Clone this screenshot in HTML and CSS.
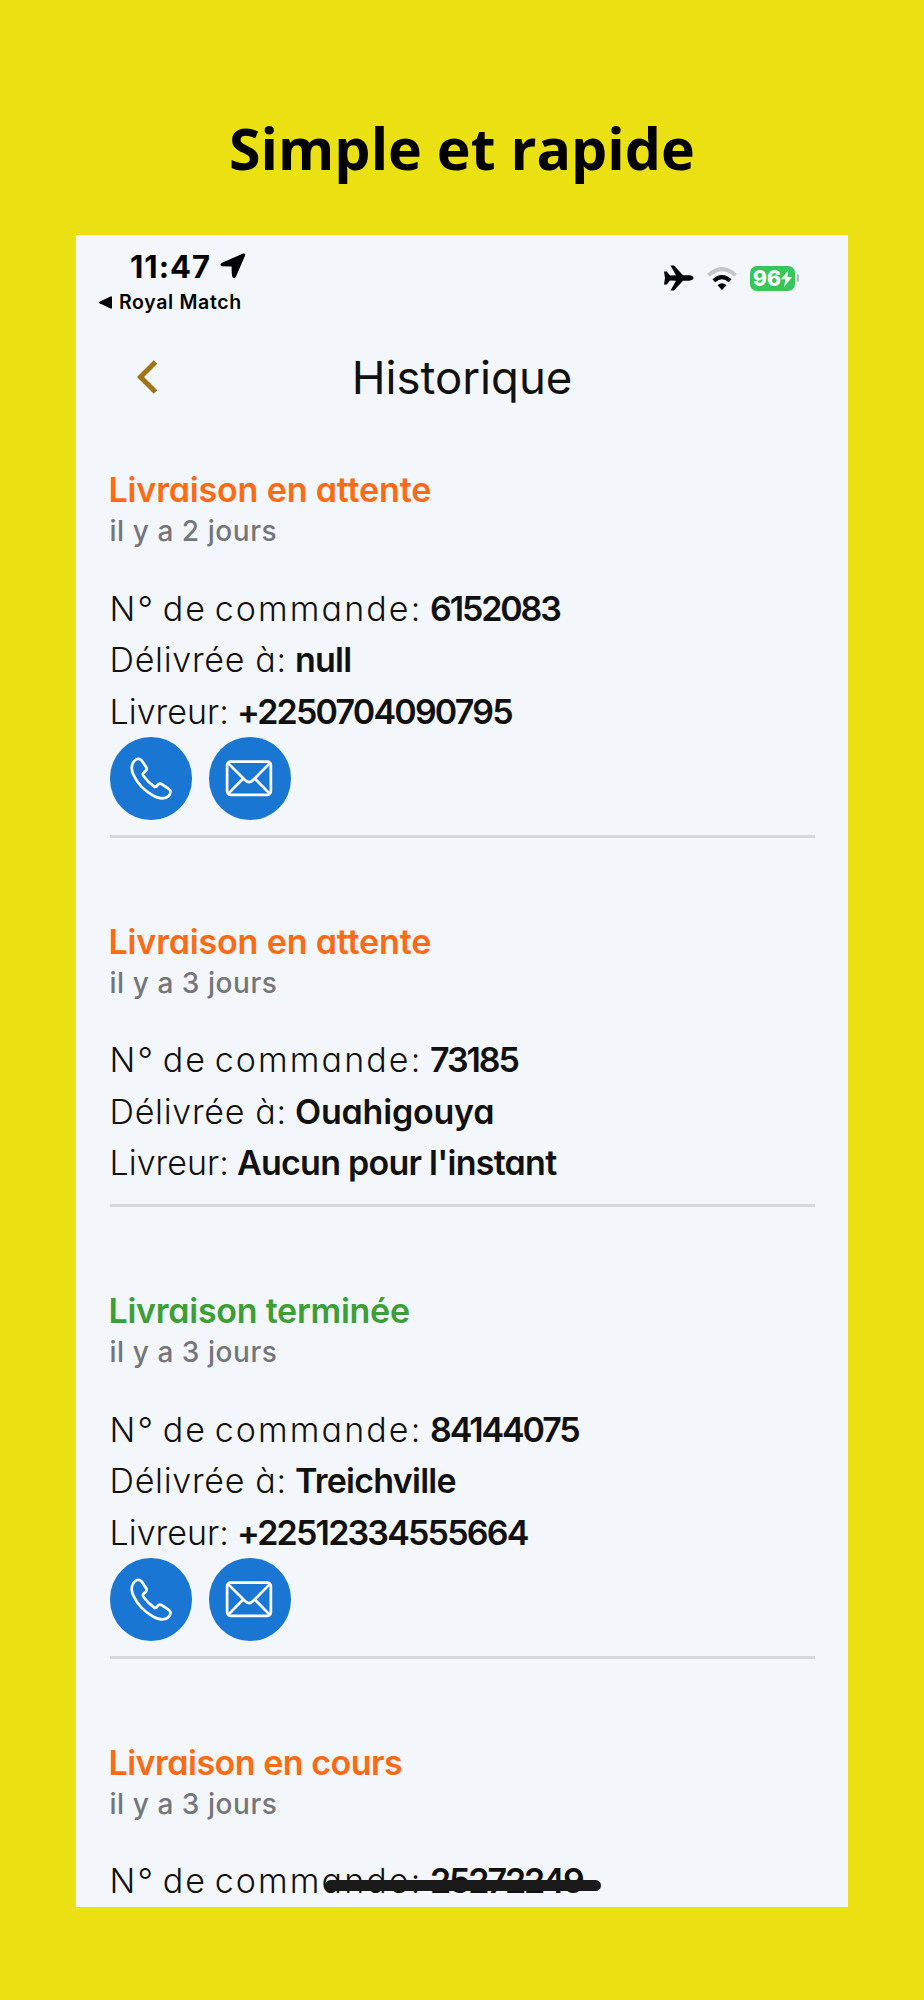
FILE: index.html
```html
<!DOCTYPE html>
<html lang="fr">
<head>
    <meta charset="UTF-8">
    <title>Historique</title>
    <link rel="stylesheet" href="styles.css">
</head>
<body>
    <!-- Symboles partagés par les boutons d'action -->
    <svg class="symbols">
        <symbol id="icon-phone" viewBox="0 0 82 82">
            <path d="M23 25.5 C25 21.5 29 20.5 31.5 23.5 L36 30 C37 32 36.500 33 35 34.200 C32.500 36 32 37 33.500 39 C36.500 43 40 46.500 44 49.300 C45.500 50.300 46.500 49 47.500 47.600 C48.700 46 50 46 51.800 47 L58 51.200 C61 53.500 60.500 56 58.500 58.500 C54.500 62 48.500 61.500 42.500 58 C33.500 53 27 45.500 23.300 37.500 C21.200 33 21.200 28.500 23 25.500 Z"/>
        </symbol>
        <symbol id="icon-mail" viewBox="0 0 82 82">
            <rect x="18" y="24.500" width="43.500" height="33" rx="3.500"/>
            <path d="M19 26 L35.500 42.500 Q39.800 47 44.100 42.500 L60.500 26 M19 56.500 L34 41.300 M60.500 56.500 L45.500 41.300"/>
        </symbol>
    </svg>

    <h1 class="headline">Simple et rapide</h1>

    <main class="phone">
        <div class="status-bar">
            <div class="status-left">
                <div class="clock">
                    <span>11:47</span>
                    <svg class="location" viewBox="0 0 26 26"><path d="M22.500 .8 Q25.800 -.3 24.900 3 L16 23.500 Q14.300 26.500 12.400 24 Q11.700 23 11.600 13.600 L2 13.300 Q-1.200 11.800 2 9.800 Z"/></svg>
                </div>
                <div class="back-app">
                    <svg class="triangle" viewBox="0 0 13 13"><path d="M.5 5.700 L11.500 .4 Q13 0 13 1.500 V11.500 Q13 13 11.500 12.600 L.5 7.300 Q-.3 6.500 .5 5.700Z"/></svg>
                    <span>Royal Match</span>
                </div>
            </div>
            <div class="status-right">
                <svg class="plane" viewBox="0 0 30 26"><path d="M0 6.500 H2.800 L6 10.600 L12 10.300 L6.500 .5 H10 L19 10.300 H25 C28 10.500 29.500 12 29.500 13 C29.500 14.200 28 15.500 25 15.700 H19 L10 25.500 H6.500 L12 15.700 L6 15.400 L2.800 19.500 H0 L1 13 Z"/></svg>
                <svg class="wifi" viewBox="0 0 30 23">
                    <path class="off" d="M1.500 8.300 Q15 -4 28.500 8.300"/>
                    <path class="on" d="M6.800 13.800 Q15 6.300 23.200 13.800"/>
                    <path d="M15 23 L10.500 18.300 Q15 14.300 19.500 18.300 Z"/>
                </svg>
                <div class="battery">
                    <span>96</span>
                    <svg class="bolt" viewBox="0 0 11 17"><path d="M7.500 0 L0 9.300 H4.500 L3 17 L11 7 H6.300 Z"/></svg>
                </div>
                <div class="battery-cap"></div>
            </div>
        </div>

        <header class="topbar">
            <svg class="back" viewBox="0 0 21 34"><path d="M18.500 2 L3.500 17 L18.500 32"/></svg>
            <h2>Historique</h2>
        </header>

        <section class="order">
            <h3 class="status pending">Livraison en attente</h3>
            <p class="date">il y a 2 jours</p>
            <p class="row"><span class="order-no">N° de commande:</span><strong class="num">6152083</strong></p>
            <p class="row"><span class="place">Délivrée à:</span><strong>null</strong></p>
            <p class="row"><span class="courier">Livreur:</span><strong class="tel">+2250704090795</strong></p>
            <div class="actions">
                <a class="action"><svg><use href="#icon-phone"/></svg></a>
                <a class="action"><svg><use href="#icon-mail"/></svg></a>
            </div>
        </section>

        <section class="order">
            <h3 class="status pending">Livraison en attente</h3>
            <p class="date">il y a 3 jours</p>
            <p class="row"><span class="order-no">N° de commande:</span><strong class="num">73185</strong></p>
            <p class="row"><span class="place">Délivrée à:</span><strong class="city">Ouahigouya</strong></p>
            <p class="row"><span class="courier">Livreur:</span><strong>Aucun pour l'instant</strong></p>
        </section>

        <section class="order">
            <h3 class="status done">Livraison terminée</h3>
            <p class="date">il y a 3 jours</p>
            <p class="row"><span class="order-no">N° de commande:</span><strong class="num">84144075</strong></p>
            <p class="row"><span class="place">Délivrée à:</span><strong>Treichville</strong></p>
            <p class="row"><span class="courier">Livreur:</span><strong class="tel">+22512334555664</strong></p>
            <div class="actions">
                <a class="action"><svg><use href="#icon-phone"/></svg></a>
                <a class="action"><svg><use href="#icon-mail"/></svg></a>
            </div>
        </section>

        <section class="order">
            <h3 class="status ongoing">Livraison en cours</h3>
            <p class="date">il y a 3 jours</p>
            <p class="row masked"><span class="order-no">N° de commande:</span><strong class="num">25272249</strong></p>
        </section>
    </main>
</body>
</html>
```
FILE: styles.css
```css
* {
    box-sizing: border-box;
}

body {
    margin: 0;
    height: 2000px;
    overflow: hidden;
    background: #ebe112;
    color: #111;
    font-family: Inter, "Noto Sans", sans-serif;
}

h1, h2, h3, p {
    margin: 0;
}

.symbols {
    display: none;
}

.headline {
    height: 235px;
    padding-top: 107px;
    text-align: center;
    font-family: "Open Sans", "Noto Sans", sans-serif;
    font-size: 57.3px;
    line-height: 82px;
    font-weight: 700;
    color: #000;
}

.phone {
    width: 772px;
    height: 1672px;
    margin: 0 auto;
    padding: 0 33.5px;
    background: #f3f6fb;
    overflow: hidden;
}

/* Barre d'état */
.status-bar {
    display: flex;
    justify-content: space-between;
    height: 96px;
    color: #000;
}

.clock {
    display: flex;
    align-items: center;
    gap: 9px;
    height: 36px;
    margin: 13px 0 0 20.5px;
    font-size: 31px;
    font-weight: 750;
    letter-spacing: 1px;
}

.location {
    width: 26px;
    height: 26px;
}

.back-app {
    display: flex;
    align-items: center;
    gap: 7px;
    height: 24px;
    margin: 6px 0 0 -10.5px;
    font-size: 19.5px;
    font-weight: 600;
    letter-spacing: 0.65px;
}

.triangle {
    width: 13px;
    height: 13px;
}

.status-right {
    display: flex;
    align-items: center;
    height: 26px;
    margin: 30px 15.5px 0 0;
}

.plane {
    width: 30px;
    height: 26px;
    margin-right: 13px;
}

.wifi {
    width: 30px;
    height: 23px;
    margin-right: 13px;
}

.wifi .on,
.wifi .off {
    fill: none;
    stroke: #000;
    stroke-width: 4;
}

.wifi .off {
    stroke: #c3c6ca;
}

.battery {
    display: flex;
    align-items: center;
    justify-content: center;
    width: 45px;
    height: 25px;
    border-radius: 7px;
    background: #35c759;
    color: #fff;
    font-size: 21px;
    font-weight: 800;
}

.bolt {
    width: 11px;
    height: 17px;
    fill: #fff;
}

.battery-cap {
    width: 2px;
    height: 8px;
    margin-left: 2px;
    border-radius: 0 2px 2px 0;
    background: #b4b8bc;
}

/* En-tête */
.topbar {
    display: grid;
    grid-template-columns: 48px 1fr 48px;
    align-items: center;
    height: 92px;
}

.back {
    width: 21px;
    height: 34px;
    margin-left: 27px;
    fill: none;
    stroke: #9f7516;
    stroke-width: 5;
}

.topbar h2 {
    text-align: center;
    font-size: 45.5px;
    font-weight: 430;
    font-feature-settings: "cv11";
}

/* Commandes */
.order {
    height: 369.5px;
    padding-top: 43px;
    font-feature-settings: "cv11";
}

.order:has(.actions) {
    height: 451.5px;
}

.status {
    margin-left: -1px;
    font-size: 34px;
    line-height: 48px;
    font-weight: 600;
    letter-spacing: -0.15px;
}

.pending,
.ongoing {
    color: #ff6b14;
}

.ongoing {
    letter-spacing: -0.5px;
}

.done {
    color: #3c9f35;
    letter-spacing: -0.25px;
}

.date {
    margin-bottom: 34.5px;
    color: #757679;
    font-size: 28px;
    line-height: 34px;
    font-weight: 500;
    letter-spacing: 0.55px;
    font-feature-settings: normal;
}

.row {
    display: flex;
    font-size: 34px;
    line-height: 51.5px;
    font-weight: 330;
}

.row strong {
    font-weight: 600;
    letter-spacing: -0.75px;
}

.row .num {
    letter-spacing: -2.1px;
}

.row .tel {
    letter-spacing: -1.8px;
}

.row .city {
    letter-spacing: -0.2px;
}

.order-no {
    width: 320.5px;
    letter-spacing: 2.1px;
    word-spacing: -4px;
}

.place {
    width: 185.5px;
    letter-spacing: 0.7px;
}

.courier {
    width: 127.5px;
    letter-spacing: 0;
}

.actions {
    display: flex;
    gap: 16.5px;
}

.action {
    width: 82.5px;
    height: 82.5px;
    border-radius: 50%;
    background: #1976d2;
}

.action svg {
    display: block;
    width: 100%;
    height: 100%;
    fill: none;
    stroke: #fff;
    stroke-width: 2.7;
    stroke-linejoin: round;
}

.order:not(:last-child)::after {
    content: "";
    display: block;
    height: 3px;
    margin-top: 15px;
    background: #d5d9dd;
}

/* Trait de masquage sur le numéro */
.masked {
    position: relative;
}

.masked::after {
    content: "";
    position: absolute;
    left: 215px;
    top: 25px;
    width: 276px;
    height: 11px;
    border-radius: 6px;
    background: #1a1a1a;
}
```
